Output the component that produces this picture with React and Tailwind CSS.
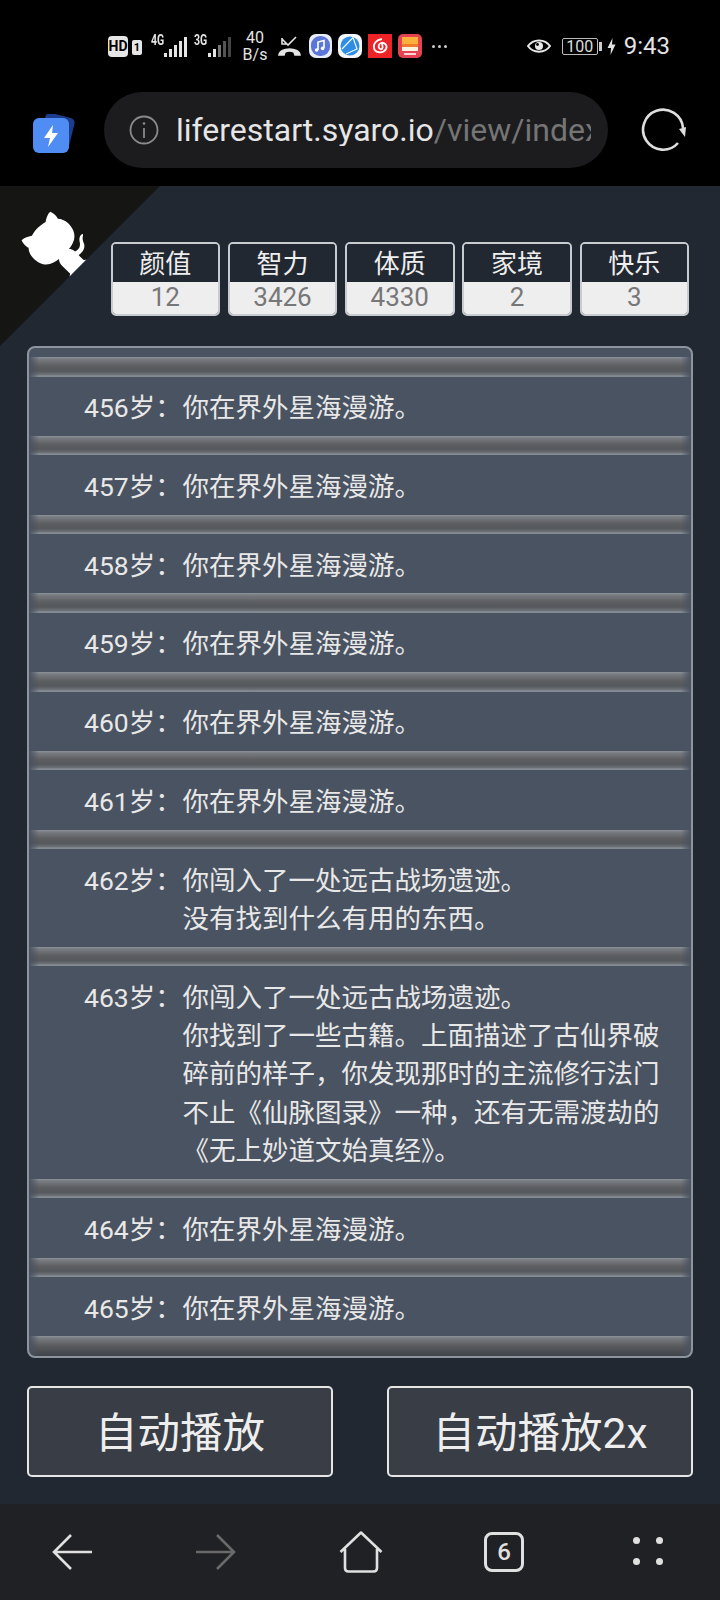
import React from 'react';

const rows = [
  { age: 456, lines: ['你在界外星海漫游。'] },
  { age: 457, lines: ['你在界外星海漫游。'] },
  { age: 458, lines: ['你在界外星海漫游。'] },
  { age: 459, lines: ['你在界外星海漫游。'] },
  { age: 460, lines: ['你在界外星海漫游。'] },
  { age: 461, lines: ['你在界外星海漫游。'] },
  { age: 462, lines: ['你闯入了一处远古战场遗迹。', '没有找到什么有用的东西。'] },
  { age: 463, lines: ['你闯入了一处远古战场遗迹。', '你找到了一些古籍。上面描述了古仙界破碎前的样子，你发现那时的主流修行法门不止《仙脉图录》一种，还有无需渡劫的《无上妙道文始真经》。'] },
  { age: 464, lines: ['你在界外星海漫游。'] },
  { age: 465, lines: ['你在界外星海漫游。'] },
];

const stats = [
  { label: '颜值', value: 12 },
  { label: '智力', value: 3426 },
  { label: '体质', value: 4330 },
  { label: '家境', value: 2 },
  { label: '快乐', value: 3 },
];

const Separator = () => (
  <div className="h-[19.5px] bg-[linear-gradient(to_bottom,#8d9299_0%,#777a7f_12%,#5c5e61_45%,#55585c_70%,#6d7278_88%,#8f959c_96%,#6f7784_100%)] [mask-image:linear-gradient(to_right,transparent,black_1.5%,black_98.5%,transparent)]"></div>
);

const LastSeparator = () => (
  <div className="h-[19.5px] bg-[linear-gradient(to_bottom,#8d9299_0%,#777a7f_12%,#5c5e61_45%,#4b4e53_75%,#40454c_100%)] [mask-image:linear-gradient(to_right,transparent,black_1.5%,black_98.5%,transparent)]"></div>
);

const Signal = ({ dim }) => (
  <svg width="24" height="24" viewBox="0 0 24 24" fill="#e4e4e4">
    <rect x="1" y="18" width="3" height="4" />
    <rect x="6" y="14" width="3" height="8" />
    <rect x="11" y="10" width="3" height="12" fill={dim ? '#777' : '#e4e4e4'} />
    <rect x="16" y="6" width="3" height="16" fill={dim ? '#555' : '#e4e4e4'} />
    <rect x="21" y="2" width="3" height="20" fill={dim ? '#444' : '#e4e4e4'} />
  </svg>
);

const StatusBar = () => (
  <div className="h-[92px] relative flex items-center pl-[108px] pr-[50px] text-[#e4e4e4]">
    <div className="w-[20px] h-[21px] rounded-[4px] bg-[#e6e6e6] text-black text-[14px] font-bold flex items-center justify-center">HD</div>
    <div className="ml-[4px] w-[10px] h-[15px] rounded-[2px] bg-[#e6e6e6] text-black text-[11px] font-bold leading-[15px] text-center mt-[3px]">1</div>
    <div className="ml-[9px] text-[14px] font-bold leading-none mb-[12px] w-[13px] scale-x-75 origin-left">4G</div>
    <div className="-ml-[1px] w-[24px] mt-[1px]"><Signal /></div>
    <div className="ml-[7px] text-[14px] font-bold leading-none mb-[12px] w-[13px] scale-x-75 origin-left">3G</div>
    <div className="w-[24px] mt-[1px]"><Signal dim /></div>
    <div className="ml-[13px] w-[22px] text-center text-[16px] leading-[17px] whitespace-nowrap flex flex-col items-center">
      <span>40</span>
      <span>B/s</span>
    </div>
    <svg className="ml-[12px]" width="23" height="21" viewBox="0 0 23 21" fill="none" stroke="#e4e4e4" strokeWidth="1.6">
      <path d="M4 2 L4 8 L9 8 M4 3 L10 9 L18 1" />
      <path d="M1 19 C2 11 21 11 22 19 L17 19 L16 16 C13 14.5 10 14.5 7 16 L6 19 Z" fill="#e4e4e4" />
    </svg>
    <svg className="ml-[8px]" width="23" height="24" viewBox="0 0 23 24">
      <rect width="23" height="24" rx="7" fill="#e8ebf8" />
      <rect x="2" y="2" width="19" height="20" rx="9" fill="#5a76d8" />
      <path d="M9 16 V8 L15 6.5 V14" fill="none" stroke="#fff" strokeWidth="1.6" />
      <circle cx="7.6" cy="16" r="1.8" fill="#fff" />
      <circle cx="13.6" cy="14.4" r="1.8" fill="#fff" />
    </svg>
    <svg className="ml-[6px]" width="24" height="24" viewBox="0 0 24 24">
      <rect width="24" height="24" rx="7" fill="#f4f7fb" />
      <circle cx="12" cy="12" r="9.5" fill="#2f8de4" />
      <path d="M4 15 L15 3.5 L19 15 L8 20" fill="none" stroke="#fff" strokeWidth="1.1" />
    </svg>
    <svg className="ml-[6px]" width="24" height="24" viewBox="0 0 24 24">
      <rect width="24" height="24" fill="#ee2327" />
      <path d="M14 5 C8 6 5 10 6 14 C7 19 15 20 18 15 C20 11 16 8 13 9 C10 10 10 14 12 15 C14 16 15 14 14.5 12 L14 9" fill="none" stroke="#fff" strokeWidth="1.8" />
    </svg>
    <svg className="ml-[6px]" width="24" height="24" viewBox="0 0 24 24">
      <rect width="24" height="24" rx="5" fill="#e4434f" />
      <rect x="4" y="3" width="16" height="7" fill="#fbb03b" />
      <rect x="4" y="10" width="16" height="3" fill="#f47a2d" />
      <rect x="4" y="13" width="16" height="4" fill="#fff3e0" />
      <rect x="6" y="19" width="12" height="2" fill="#fbd5d5" />
    </svg>
    <div className="ml-[10px] flex gap-[3px]">
      <span className="w-[3px] h-[3px] rounded-full bg-[#ccc]"></span>
      <span className="w-[3px] h-[3px] rounded-full bg-[#ccc]"></span>
      <span className="w-[3px] h-[3px] rounded-full bg-[#ccc]"></span>
    </div>
    <svg className="ml-auto" width="24" height="16" viewBox="0 0 24 16" fill="none" stroke="#e8e8e8" strokeWidth="2">
      <path d="M1 8 C6 0.5 18 0.5 23 8 C18 15.5 6 15.5 1 8 Z" />
      <circle cx="12" cy="8" r="4" fill="#e8e8e8" stroke="none" />
      <circle cx="10.5" cy="6.5" r="1.4" fill="#000" stroke="none" />
    </svg>
    <div className="ml-[11px] w-[36px] h-[17px] rounded-[2px] border border-[#bbb] text-[16px] leading-[15px] text-center text-[#ddd]">100</div>
    <div className="ml-[1px] w-[3px] h-[9px] bg-[#ccc]"></div>
    <svg className="ml-[5px]" width="9" height="17" viewBox="0 0 9 17" fill="#e4e4e4">
      <path d="M5.5 0 L0.5 10 H4 L3.5 17 L8.5 6.5 H5 Z" />
    </svg>
    <div className="ml-[8px] text-[24px] leading-none text-[#e4e4e4]">9:43</div>
  </div>
);

const UrlBar = () => (
  <div className="h-[94px] flex items-start">
    <svg className="ml-[32px] mt-[22px] shrink-0" width="48" height="40" viewBox="0 0 48 40">
      <rect x="10" y="1" width="30" height="35" rx="5" fill="#1c3d8c" transform="rotate(14 25 18)" />
      <rect x="1" y="4" width="36" height="35" rx="6" fill="#4f8df5" />
      <path d="M21 11 L12 24 H18 L16 33 L26 19 H20 Z" fill="#fff" />
    </svg>
    <div className="ml-[24px] w-[504px] h-[76px] rounded-[38px] bg-[#1c1c1e] flex items-center pl-[25px] pr-[16px] shrink-0">
      <svg width="30" height="30" viewBox="0 0 30 30" fill="none" stroke="#8a8a8a" strokeWidth="1.8" className="shrink-0">
        <circle cx="15" cy="15" r="13.5" />
        <path d="M15 13 V23" />
        <circle cx="15" cy="8.5" r="1.3" fill="#8a8a8a" stroke="none" />
      </svg>
      <div className="ml-[17px] w-[415px] overflow-hidden whitespace-nowrap text-[32px] leading-none">
        <span className="text-[#e6e6e6]">liferestart.syaro.io</span>
        <span className="text-[#757575]">/view/index</span>
      </div>
    </div>
    <svg className="ml-[32px] mt-[14px] shrink-0" width="48" height="46" viewBox="0 0 48 46" fill="none" stroke="#dedede" strokeWidth="2.6">
      <path d="M38 37 A20 20 0 1 1 43 22" />
      <path d="M39 23 L46 21 L45 31 Z" fill="#dedede" stroke="none" />
    </svg>
  </div>
);

const StatBox = ({ label, value }) => (
  <div className="w-[109.5px] h-[74px] rounded-[5px] border-2 border-[#c8cbcf] overflow-hidden flex flex-col">
    <div className="h-[38px] bg-[#222831] text-[#eeeeee] text-[26px] leading-[40px] text-center">{label}</div>
    <div className="flex-1 bg-[#eeeeee] text-[#777777] text-[26px] leading-[30px] text-center">{value}</div>
  </div>
);

const Row = ({ age, lines }) => (
  <div className="flex pl-[55px] pr-[30px] pt-[12.5px] pb-[8.5px] text-[26.5px] leading-[38.3px] text-[#e8e8e8]">
    <div className="w-[98.5px] shrink-0 whitespace-nowrap">{age}岁：</div>
    <div className="w-[480px]">
      {lines.map((line, index) => (
        <div key={index}>{line}</div>
      ))}
    </div>
  </div>
);

const BottomNav = () => (
  <div className="h-[96px] bg-[#202124] flex items-center">
    <svg className="ml-[52px]" width="40" height="36" viewBox="0 0 40 36" fill="none" stroke="#e0e0e0" strokeWidth="2.6">
      <path d="M40 18 H2 M19 1 L2 18 L19 35" />
    </svg>
    <svg className="ml-[104px]" width="40" height="36" viewBox="0 0 40 36" fill="none" stroke="#6a6a6a" strokeWidth="2.6">
      <path d="M0 18 H38 M21 1 L38 18 L21 35" />
    </svg>
    <svg className="ml-[103px]" width="44" height="42" viewBox="0 0 44 42" fill="none" stroke="#e0e0e0" strokeWidth="2.6" strokeLinejoin="round">
      <path d="M1.5 21 L22 1.5 L42.5 21 M6 18 V37 C6 39.5 7.5 40.5 9.5 40.5 H34.5 C36.5 40.5 38 39.5 38 37 V18" />
    </svg>
    <div className="ml-[101px] w-[40px] h-[40px] rounded-[8px] border-[3px] border-[#e0e0e0] text-[#e0e0e0] text-[24px] font-medium leading-[34px] text-center">6</div>
    <div className="ml-[109px] -mt-[2px] grid grid-cols-2 gap-x-[16px] gap-y-[14px]">
      <span className="w-[7px] h-[7px] rounded-full bg-[#e0e0e0]"></span>
      <span className="w-[7px] h-[7px] rounded-full bg-[#e0e0e0]"></span>
      <span className="w-[7px] h-[7px] rounded-full bg-[#e0e0e0]"></span>
      <span className="w-[7px] h-[7px] rounded-full bg-[#e0e0e0]"></span>
    </div>
  </div>
);

const App = () => {
  return (
    <div className="w-[720px] h-[1600px] overflow-hidden bg-black flex flex-col font-['Roboto','Noto_Sans_CJK_SC',sans-serif]">
      <StatusBar />
      <UrlBar />

      <div className="relative h-[1318px] bg-[#222831] px-[27px]">
        {/* github corner, flipped to the left side */}
        <svg className="absolute top-0 left-0 -scale-x-100" width="160" height="160" viewBox="0 0 250 250" fill="#151513">
          <path d="M0,0 L115,115 L130,115 L142,142 L250,250 L250,0 Z" />
          <path d="M128.3,109.0 C113.8,99.7 119.0,89.6 119.0,89.6 C122.0,82.7 120.5,78.6 120.5,78.6 C119.2,72.0 123.4,76.3 123.4,76.3 C127.3,80.9 125.5,87.3 125.5,87.3 C122.9,97.6 130.6,101.9 134.4,103.2" fill="#fff" />
          <path d="M115.0,115.0 C114.9,115.1 118.7,116.5 119.8,115.4 L133.7,101.6 C136.9,99.2 139.9,98.4 142.2,98.6 C133.8,88.0 127.5,74.4 143.8,58.0 C148.5,53.4 154.0,51.2 159.7,51.0 C160.3,49.4 163.2,43.6 171.4,40.1 C171.4,40.1 176.1,42.5 178.8,56.2 C183.1,58.6 187.2,61.8 190.9,65.4 C194.5,69.0 197.7,73.2 200.1,77.6 C213.8,80.2 216.3,84.9 216.3,84.9 C212.7,93.1 206.9,96.0 205.4,96.6 C205.1,102.4 203.0,107.8 198.3,112.5 C181.9,128.9 168.3,122.5 157.7,114.1 C157.9,116.9 156.7,120.9 152.7,124.9 L141.0,136.5 C139.8,137.7 141.6,141.9 141.8,141.8 Z" fill="#fff" />
        </svg>

        {/* stats */}
        <div className="pt-[56px] pl-[83.5px] pr-[4px] flex justify-between">
          {stats.map((s) => (
            <StatBox key={s.label} label={s.label} value={s.value} />
          ))}
        </div>

        {/* life trajectory */}
        <div className="mt-[29.5px] h-[1012.5px] rounded-[8px] border-2 border-[#8f959c] bg-[#4a5361] pt-[9.5px] overflow-hidden">
          <Separator />
          {rows.map((row, index) => (
            <React.Fragment key={row.age}>
              <Row age={row.age} lines={row.lines} />
              {index === rows.length - 1 ? <LastSeparator /> : <Separator />}
            </React.Fragment>
          ))}
        </div>

        {/* buttons */}
        <div className="mt-[28px] flex justify-between">
          <button className="w-[306px] h-[91px] pt-[5px] rounded-[5px] border-2 border-[#e6e6e6] bg-[#393e46] text-[#eeeeee] text-[42.5px] leading-none">自动播放</button>
          <button className="w-[306px] h-[91px] pt-[5px] rounded-[5px] border-2 border-[#e6e6e6] bg-[#393e46] text-[#eeeeee] text-[42.5px] leading-none">自动播放2x</button>
        </div>
      </div>

      <BottomNav />
    </div>
  );
};

export default App;
